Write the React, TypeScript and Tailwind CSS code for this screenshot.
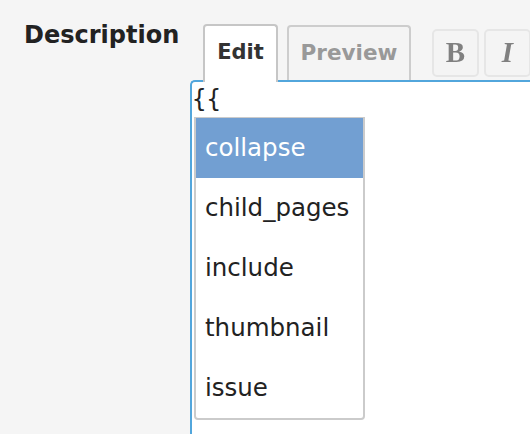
import React from "react";

const items = ["collapse", "child_pages", "include", "thumbnail", "issue"];

export default function App() {
  return (
    <div className="w-[530px] h-[434px] bg-[#f5f5f5] overflow-hidden flex" style={{ fontFamily: '"DejaVu Sans", sans-serif' }}>
      <div className="w-[190px] shrink-0 pl-[24px] pt-[17px]">
        <div className="text-[24px] leading-[36px] font-bold text-[#222]">Description</div>
      </div>
      <div className="flex-1 flex flex-col">
        <div className="flex items-end h-[80px] pl-[13px]">
          <div className="relative z-10 -mb-[2px] w-[75px] h-[58px] bg-white border-2 border-b-0 border-[#c6c6c6] rounded-t-[4px] flex items-center justify-center pb-[2px]">
            <span className="text-[21px] font-bold text-[#333]">Edit</span>
          </div>
          <div className="ml-[9px] w-[124px] h-[55px] bg-[#f4f4f4] border-2 border-b-0 border-[#cdcdcd] rounded-t-[4px] flex items-center justify-center">
            <span className="text-[21.5px] font-bold text-[#999]">Preview</span>
          </div>
          <div className="ml-[21px] mb-[3px] flex gap-[5px] self-end">
            <div className="w-[47px] h-[48px] border-2 border-[#e6e6e6] rounded-[5px] bg-[#f4f4f4] flex items-center justify-center">
              <span className="text-[29px] font-bold text-[#808080] blur-[0.7px]" style={{ fontFamily: '"Liberation Serif", serif' }}>B</span>
            </div>
            <div className="w-[47px] h-[48px] border-2 border-[#e6e6e6] rounded-[5px] bg-[#f4f4f4] flex items-center justify-center">
              <span className="text-[29px] font-bold italic text-[#808080] blur-[0.7px]" style={{ fontFamily: '"Liberation Serif", serif' }}>I</span>
            </div>
          </div>
        </div>
        <div className="relative flex-1 bg-white border-t-2 border-l-2 border-[#52a6dc] rounded-tl-[5px]">
          <div className="pl-[0px] pt-[1px] text-[24px] leading-[32px] text-[#222]" style={{ fontFamily: '"DejaVu Sans Mono", monospace' }}>{"{{"}</div>
          <div className="absolute left-[2px] top-[35px] w-[171px] bg-white border-2 border-t-[1px] border-[#cbcbcb] rounded-b-[4px]">
            {items.map((it, i) => (
              <div
                key={it}
                className={
                  i === 0
                    ? "h-[60px] flex items-center pl-[9px] text-[24.5px] bg-[#729fd2] text-white"
                    : "h-[60px] flex items-center pl-[9px] text-[24.5px] text-[#222]"
                }
              >
                {it}
              </div>
            ))}
          </div>
        </div>
      </div>
    </div>
  );
}
